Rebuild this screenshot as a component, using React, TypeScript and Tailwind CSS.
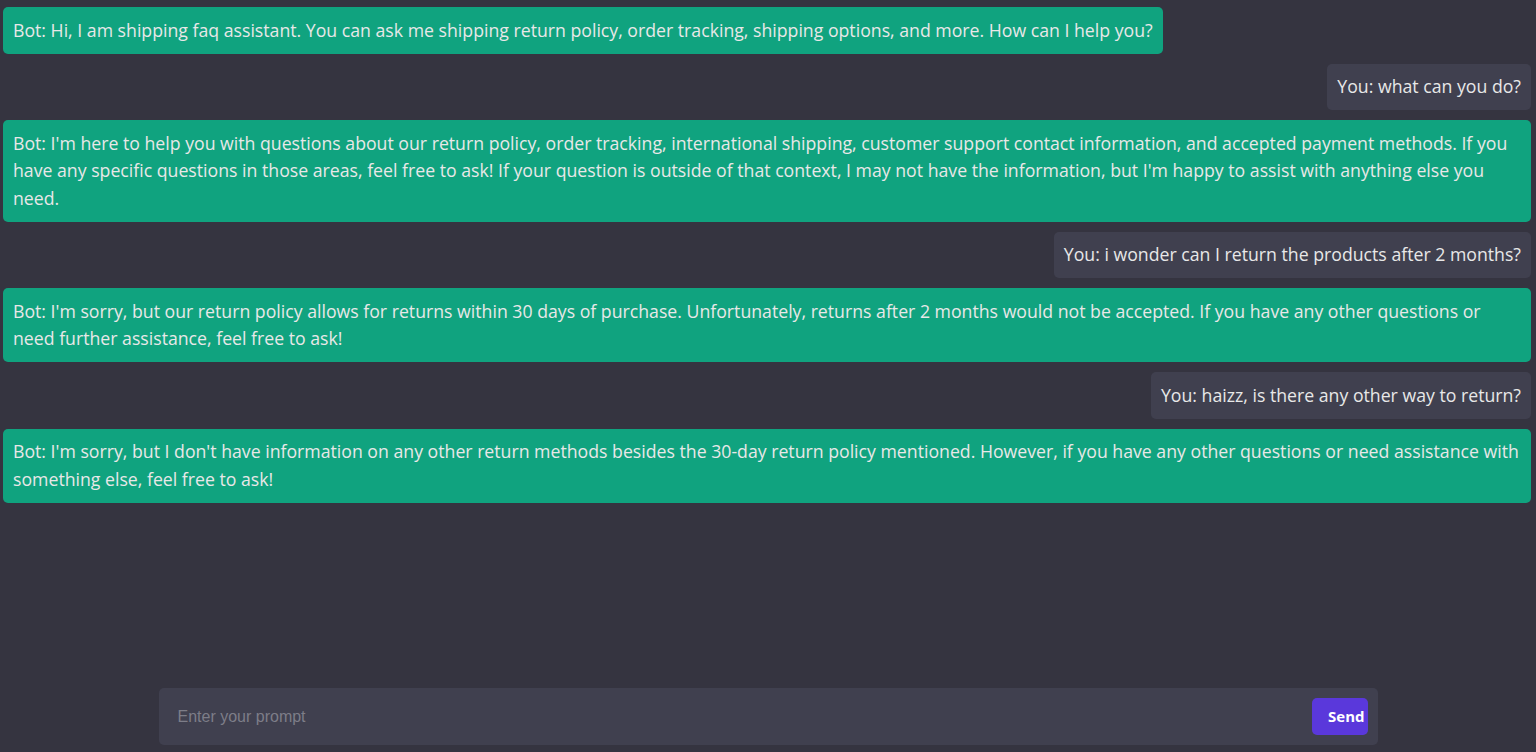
import { useState } from 'react';

type Message = {
  from: 'bot' | 'user';
  text: string;
};

const messages: Message[] = [
  {
    from: 'bot',
    text: 'Hi, I am shipping faq assistant. You can ask me shipping return policy, order tracking, shipping options, and more. How can I help you?',
  },
  { from: 'user', text: 'what can you do?' },
  {
    from: 'bot',
    text: "I'm here to help you with questions about our return policy, order tracking, international shipping, customer support contact information, and accepted payment methods. If you have any specific questions in those areas, feel free to ask! If your question is outside of that context, I may not have the information, but I'm happy to assist with anything else you need.",
  },
  { from: 'user', text: 'i wonder can I return the products after 2 months?' },
  {
    from: 'bot',
    text: "I'm sorry, but our return policy allows for returns within 30 days of purchase. Unfortunately, returns after 2 months would not be accepted. If you have any other questions or need further assistance, feel free to ask!",
  },
  { from: 'user', text: 'haizz, is there any other way to return?' },
  {
    from: 'bot',
    text: "I'm sorry, but I don't have information on any other return methods besides the 30-day return policy mentioned. However, if you have any other questions or need assistance with something else, feel free to ask!",
  },
];

function App() {
  const [prompt, setPrompt] = useState('');

  return (
    <div className="h-[752px] w-full bg-[#353440] flex flex-col overflow-hidden [font-family:'Open_Sans','Noto_Sans',sans-serif]">
      {/* chat history */}
      <div className="flex-1 flex flex-col gap-[10px] pt-[7px] pl-[3px] pr-[5px]">
        {messages.map((m, i) => (
          <div key={i} className={m.from === 'bot' ? 'flex justify-start' : 'flex justify-end'}>
            <div
              className={`rounded-[5px] px-[10px] py-[9.5px] text-[17.7px] leading-[27.5px] text-[#e8e8e8] ${
                m.from === 'bot' ? 'bg-[#10a37f]' : 'bg-[#40404f]'
              }`}
            >
              {`${m.from === 'bot' ? 'Bot' : 'You'}: ${m.text}`}
            </div>
          </div>
        ))}
      </div>

      {/* prompt input */}
      <div className="flex justify-center pb-[7px]">
        <div className="w-[1219px] h-[57px] bg-[#40404f] rounded-[5px] flex items-center pl-[19px] pr-[10px]">
          <input
            value={prompt}
            onChange={(e) => setPrompt(e.target.value)}
            placeholder="Enter your prompt"
            className="flex-1 bg-transparent outline-none text-[16px] text-[#e8e8e8] placeholder:text-[#7d7d88] [font-family:'Liberation_Sans',Arial,sans-serif]"
          />
          <button className="w-[56px] h-[37px] rounded-[5px] bg-[#5a38db] text-white text-[15px] font-bold flex items-center justify-end pr-[3px] [font-family:'Open_Sans',sans-serif]">
            Send
          </button>
        </div>
      </div>
    </div>
  );
}

export default App;
